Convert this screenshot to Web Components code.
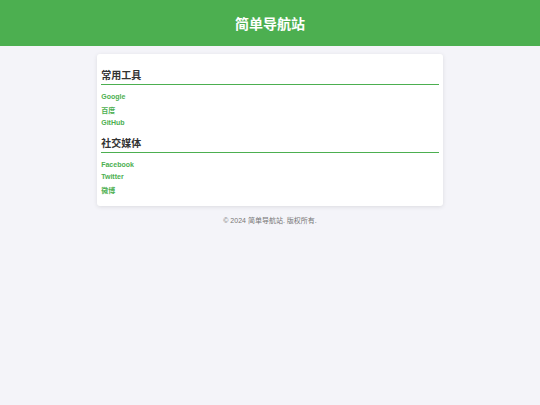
<!DOCTYPE html>
<html lang="zh-CN">
<head>
<meta charset="UTF-8">
<meta name="viewport" content="width=device-width, initial-scale=1.0">
<title>简单导航站</title>
<style>
    body {
        margin: 0;
        font-family: "Liberation Sans", "Noto Sans CJK SC", sans-serif;
        font-size: 7px;
        color: #333;
        background: #f4f4f9;
    }
</style>
</head>
<body>
<site-header>简单导航站</site-header>
<nav-card>
    <nav-section heading="常用工具">
        <nav-link href="#google">Google</nav-link>
        <nav-link href="#baidu" cjk>百度</nav-link>
        <nav-link href="#github">GitHub</nav-link>
    </nav-section>
    <nav-section heading="社交媒体">
        <nav-link href="#facebook">Facebook</nav-link>
        <nav-link href="#twitter">Twitter</nav-link>
        <nav-link href="#weibo" cjk>微博</nav-link>
    </nav-section>
</nav-card>
<site-footer>© 2024 简单导航站. 版权所有.</site-footer>

<script>
    // 页头
    class SiteHeader extends HTMLElement {
        constructor() {
            super();
            this.attachShadow({ mode: 'open' });
            this.shadowRoot.innerHTML = `
                <style>
                    :host {
                        display: block;
                    }

                    header {
                        padding: 14px 8px 12px;
                        background: #4caf50;
                        color: white;
                        text-align: center;
                    }

                    h1 {
                        margin: 0;
                        font-size: 14px;
                        line-height: 20px;
                    }
                </style>
                <header><h1><slot></slot></h1></header>
            `;
        }
    }

    // 内容卡片
    class NavCard extends HTMLElement {
        constructor() {
            super();
            this.attachShadow({ mode: 'open' });
            this.shadowRoot.innerHTML = `
                <style>
                    :host {
                        display: block;
                        box-sizing: border-box;
                        width: 64%;
                        max-width: 820px;
                        margin: 8px auto;
                        padding: 15px 4px 11px;
                        background: white;
                        border-radius: 3px;
                        box-shadow: 0 1px 4px rgba(0, 0, 0, 0.1);
                    }

                    main {
                        display: flex;
                        flex-direction: column;
                        gap: 10px;
                    }
                </style>
                <main><slot></slot></main>
            `;
        }
    }

    // 链接分组
    class NavSection extends HTMLElement {
        constructor() {
            super();
            this.attachShadow({ mode: 'open' });
            this.shadowRoot.innerHTML = `
                <style>
                    :host {
                        display: block;
                    }

                    h2 {
                        margin: 0 0 8px;
                        padding-bottom: 1px;
                        border-bottom: 1px solid #4caf50;
                        font-size: 10px;
                        line-height: 14px;
                    }

                    nav {
                        display: flex;
                        flex-direction: column;
                        gap: 4px;
                    }
                </style>
                <section>
                    <h2></h2>
                    <nav><slot></slot></nav>
                </section>
            `;
        }

        connectedCallback() {
            const heading = this.getAttribute('heading');
            this.shadowRoot.querySelector('h2').textContent = heading;
            this.shadowRoot.querySelector('nav').setAttribute('aria-label', heading);
        }
    }

    // 单个链接
    class NavLink extends HTMLElement {
        constructor() {
            super();
            this.attachShadow({ mode: 'open' });
            this.shadowRoot.innerHTML = `
                <style>
                    :host {
                        display: flex;
                        line-height: 8px;
                    }

                    /* 中文字形较高，上方多留一点空间 */
                    :host([cjk]) {
                        padding-top: 2px;
                    }

                    a {
                        color: #4caf50;
                        font-weight: bold;
                        text-decoration: none;
                    }

                    a:hover {
                        text-decoration: underline;
                    }
                </style>
                <a><slot></slot></a>
            `;
        }

        connectedCallback() {
            this.shadowRoot.querySelector('a').href = this.getAttribute('href');
        }
    }

    // 页脚
    class SiteFooter extends HTMLElement {
        constructor() {
            super();
            this.attachShadow({ mode: 'open' });
            this.shadowRoot.innerHTML = `
                <style>
                    :host {
                        display: block;
                    }

                    footer {
                        padding: 2px 8px;
                        color: #777;
                        line-height: 10px;
                        text-align: center;
                    }
                </style>
                <footer><slot></slot></footer>
            `;
        }
    }

    customElements.define('site-header', SiteHeader);
    customElements.define('nav-card', NavCard);
    customElements.define('nav-section', NavSection);
    customElements.define('nav-link', NavLink);
    customElements.define('site-footer', SiteFooter);
</script>
</body>
</html>
